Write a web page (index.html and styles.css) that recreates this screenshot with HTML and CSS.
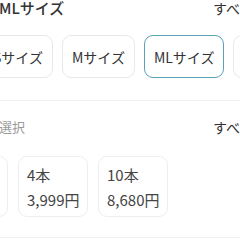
FILE: index.html
```html
<!DOCTYPE html>
<html lang="ja">
<head>
<meta charset="utf-8">
<link rel="stylesheet" href="styles.css">
</head>
<body>
<div class="page">
  <section class="block size-block">
    <div class="head">
      <span class="title">MLサイズ</span>
      <span class="more">すべて見る</span>
    </div>
    <div class="options">
      <button class="opt">Sサイズ</button>
      <button class="opt">Mサイズ</button>
      <button class="opt selected">MLサイズ</button>
      <button class="opt">Lサイズ</button>
    </div>
  </section>
  <section class="block qty-block">
    <div class="head">
      <span class="label">本数を選択</span>
      <span class="more">すべて見る</span>
    </div>
    <div class="cards">
      <div class="card"><div>2本</div><div>1,999円</div></div>
      <div class="card"><div>4本</div><div>3,999円</div></div>
      <div class="card"><div>10本</div><div>8,680円</div></div>
    </div>
  </section>
</div>
</body>
</html>
```

FILE: styles.css
```css
html, body {
  margin: 0;
  padding: 0;
  background: #ffffff;
}
body {
  font-family: "Noto Sans CJK JP", "Noto Sans", sans-serif;
  color: #333333;
  width: 240px;
  height: 240px;
  overflow: hidden;
}
.page {
  width: 240px;
  overflow: hidden;
}
.block {
  border-bottom: 1px solid #f0f0f0;
}
.head {
  display: flex;
  justify-content: space-between;
  white-space: nowrap;
  line-height: 20px;
}
.size-block {
  margin-top: -2px;
  padding-bottom: 22px;
}
.size-block .head {
  margin-left: -1px;
  margin-right: -60px;
}
.title {
  font-size: 15px;
  font-weight: 500;
  color: #333333;
}
.more {
  font-size: 14px;
  color: #333333;
  width: 87px;
  overflow: hidden;
}
.options {
  display: flex;
  gap: 9px;
  margin-top: 17px;
  margin-left: -17px;
  white-space: nowrap;
}
.opt {
  flex: none;
  height: 43px;
  padding: 0 9px;
  border: 1px solid #e8e8e8;
  border-radius: 9px;
  background: #ffffff;
  font-family: inherit;
  font-size: 14px;
  color: #333333;
}
.opt.selected {
  border: 1.5px solid #5aa2b8;
}
.qty-block {
  padding-top: 16px;
  padding-bottom: 20px;
}
.qty-block .head {
  margin-right: -60px;
}
.label {
  font-size: 13px;
  color: #9a9a9a;
  margin-left: -40px;
}
.cards {
  display: flex;
  gap: 10px;
  margin-top: 19px;
  margin-left: -62px;
}
.card {
  flex: none;
  box-sizing: border-box;
  width: 70px;
  height: 61px;
  padding: 5px 8px;
  border: 1px solid #eeeeee;
  border-radius: 9px;
  font-size: 15px;
  line-height: 25px;
  color: #444444;
  white-space: nowrap;
}
```
